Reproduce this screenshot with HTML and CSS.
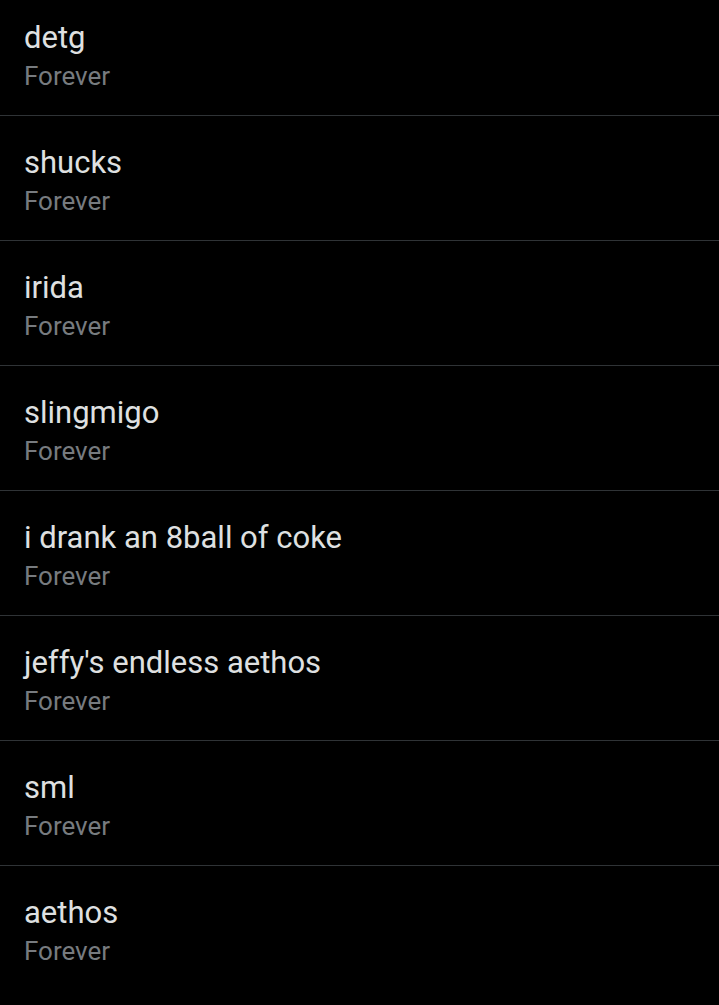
FILE: index.html
```html
<!DOCTYPE html>
<html lang="en">
<head>
  <meta charset="UTF-8">
  <meta name="viewport" content="width=device-width, initial-scale=1.0">
  <title>Muted words</title>
  <link rel="stylesheet" href="styles.css">
</head>
<body>
  <ul class="list">
    <li class="item"><div class="word">detg</div><div class="duration">Forever</div></li>
    <li class="item"><div class="word">shucks</div><div class="duration">Forever</div></li>
    <li class="item"><div class="word">irida</div><div class="duration">Forever</div></li>
    <li class="item"><div class="word">slingmigo</div><div class="duration">Forever</div></li>
    <li class="item"><div class="word">i drank an 8ball of coke</div><div class="duration">Forever</div></li>
    <li class="item"><div class="word">jeffy's endless aethos</div><div class="duration">Forever</div></li>
    <li class="item"><div class="word">sml</div><div class="duration">Forever</div></li>
    <li class="item"><div class="word">aethos</div><div class="duration">Forever</div></li>
  </ul>
</body>
</html>
```

FILE: styles.css
```css
body {
  margin: 0;
  background-color: #000;
  font-family: Roboto, "Noto Sans", sans-serif;
  overflow: hidden;
}
.list {
  list-style: none;
  margin: -9px 0 0;
  padding: 0;
}
.item {
  height: 124px;
  box-sizing: content-box;
  padding: 0 24px;
  border-bottom: 1px solid #2f3336;
}
.item:last-child {
  border-bottom: none;
}
.word {
  padding-top: 29px;
  font-size: 31px;
  line-height: 36px;
  color: #dfe0e1;
}
.duration {
  margin-top: 4px;
  font-size: 26px;
  line-height: 32px;
  color: #777b7f;
}
```
